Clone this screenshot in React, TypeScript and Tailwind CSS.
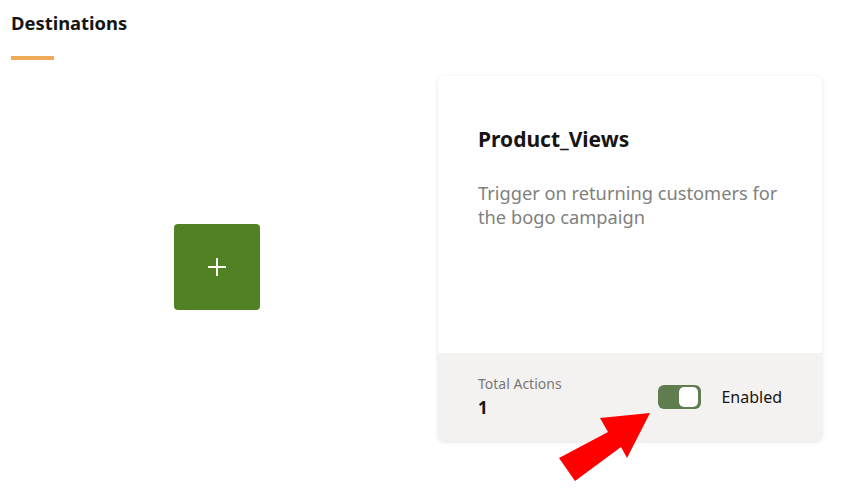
export default function App() {
  return (
    <div className="relative h-[491px] w-[859px] overflow-hidden bg-white font-['Noto_Sans',sans-serif] text-[#161513]">
      <header className="pl-[11px] pt-[10px]">
        <h1 className="text-[18.4px] font-bold leading-[25px]">Destinations</h1>
        <div className="mt-[21px] h-[4px] w-[43px] bg-[#f0ab5a]" />
      </header>

      <div className="mt-[16px] flex items-start">
        <div className="flex w-[436px] justify-center pt-[148px] pr-[2px]">
          <button className="flex h-[86px] w-[86px] items-center justify-center rounded-[4px] bg-[#508223]">
            <svg width="20" height="20" viewBox="0 0 20 20">
              <path d="M10 1v18M1 10h18" stroke="white" strokeWidth="2" />
            </svg>
          </button>
        </div>

        <div className="ml-[2px] flex h-[365px] w-[384px] flex-col overflow-hidden rounded-[6px] bg-white shadow-[0_1px_4px_rgba(0,0,0,0.12)]">
          <div className="flex-1 px-[40px] pt-[48px]">
            <h2 className="text-[21px] font-bold leading-[30px]">Product_Views</h2>
            <p className="mt-[27px] text-[18.25px] leading-[24px] text-[#817f7d]">
              Trigger on returning customers for the bogo campaign
            </p>
          </div>
          <div className="flex h-[88px] items-center justify-between bg-[#f3f2f0] pl-[40px] pr-[40px]">
            <div className="flex flex-col">
              <span className="text-[14px] leading-[18px] text-[#7a7876]">Total Actions</span>
              <span className="mt-[4px] text-[17px] font-bold leading-[22px]">1</span>
            </div>
            <div className="flex items-center gap-[20px]">
              <div className="flex h-[24px] w-[43px] items-center justify-end rounded-[6px] bg-[#5f7d4f] pr-[3px]">
                <div className="h-[20px] w-[19px] rounded-[5px] bg-white" />
              </div>
              <span className="text-[16px] leading-[22px]">Enabled</span>
            </div>
          </div>
        </div>
      </div>

      <svg className="absolute left-0 top-0" width="859" height="491" viewBox="0 0 859 491">
        <polygon
          points="650,413 600,418 608,432 559,458 575,481 621,447 627,458"
          fill="#ff0000"
        />
      </svg>
    </div>
  );
}
